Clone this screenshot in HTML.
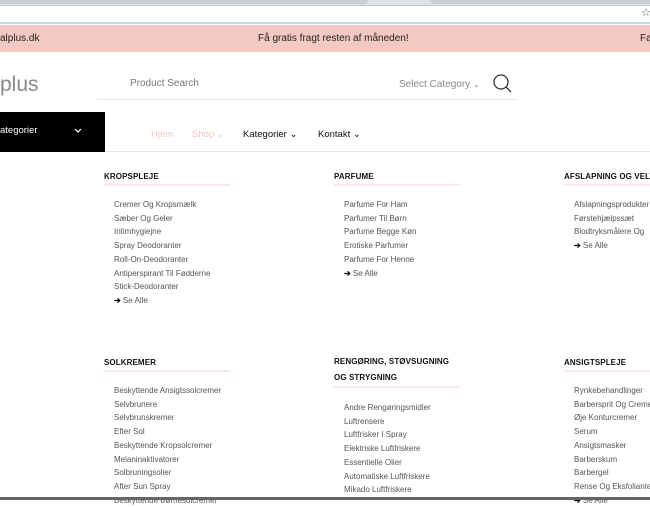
<!DOCTYPE html>
<html><head><meta charset="utf-8"><style>
*{margin:0;padding:0;box-sizing:border-box}
body{width:650px;height:500px;overflow:hidden;background:#fff;font-family:"Liberation Sans",sans-serif;position:relative}
.a{position:absolute;white-space:nowrap}
.h{font-size:8px;font-weight:bold;color:#111;letter-spacing:.1px}
.u{position:absolute;height:2px;background:#fae6e6;width:126px}
.i{font-size:8px;color:#555;line-height:13.7px}
</style></head><body>
<div class="a" style="left:0;top:0;width:650px;height:5px;background:#dfe3e8"></div>
<div class="a" style="left:0;top:0;width:368px;height:4px;background:#c9ced4;border-radius:0 0 4px 0"></div>
<div class="a" style="left:430px;top:0;width:220px;height:4px;background:#c9ced4;border-radius:0 0 0 4px"></div>
<div class="a" style="left:0;top:5px;width:650px;height:1px;background:#b7cbe6"></div>
<div class="a" style="left:0;top:22px;width:650px;height:2px;background:#c8d6ea"></div>
<div class="a" style="left:641px;top:6px;font-size:11px;color:#555">☆</div>
<div class="a" style="left:0;top:25px;width:650px;height:27px;background:#f4c8c3"></div>
<div class="a" style="left:0;top:33px;font-size:10px;color:#222">alplus.dk</div>
<div class="a" style="left:258px;top:33px;font-size:10px;color:#222">Få gratis fragt resten af måneden!</div>
<div class="a" style="left:640px;top:33px;font-size:10px;color:#222">Fa</div>
<div class="a" style="left:0;top:73px;font-size:21px;color:#8a8a8a">plus</div>
<div class="a" style="left:130px;top:78px;font-size:10px;color:#777">Product Search</div>
<div class="a" style="left:399px;top:79px;font-size:10px;color:#888">Select Category <span style="font-size:8px">⌄</span></div>
<svg class="a" style="left:492px;top:73px" width="22" height="22" viewBox="0 0 22 22"><circle cx="9" cy="9" r="7" fill="none" stroke="#333" stroke-width="1.3"/><line x1="14" y1="14" x2="19" y2="19" stroke="#333" stroke-width="1.3"/></svg>
<div class="a" style="left:97px;top:99px;width:420px;height:1px;background:#e8e8e8"></div>
<div class="a" style="left:0;top:112px;width:105px;height:40px;background:#000"></div>
<div class="a" style="left:0;top:125px;font-size:9.5px;color:#fff">ategorier</div>
<svg class="a" style="left:74px;top:128px" width="8" height="6"><path d="M1 1L4 4L7 1" fill="none" stroke="#fff" stroke-width="1.2"/></svg>
<div class="a" style="left:105px;top:151px;width:545px;height:1px;background:#e6e6e6"></div>
<div class="a" style="left:151px;top:129px;font-size:9.5px;color:#f3c4c2">Hjem</div>
<div class="a" style="left:192px;top:129px;font-size:9.5px;color:#f3c4c2">Shop ⌄</div>
<div class="a" style="left:243px;top:129px;font-size:9.5px;color:#111">Kategorier ⌄</div>
<div class="a" style="left:318px;top:129px;font-size:9.5px;color:#111">Kontakt ⌄</div>

<div class="a h" style="left:104px;top:172px">KROPSPLEJE</div><div class="u" style="left:104px;top:184px"></div>
<div class="a i" style="left:114px;top:198px">Cremer Og Kropsmælk<br>Sæber Og Geler<br>Intimhygiejne<br>Spray Deodoranter<br>Roll-On-Deodoranter<br>Antiperspirant Til Fødderne<br>Stick-Deodoranter<br><b style="color:#000">➔</b> Se Alle</div>
<div class="a h" style="left:334px;top:172px">PARFUME</div><div class="u" style="left:334px;top:184px"></div>
<div class="a i" style="left:344px;top:198px">Parfume For Ham<br>Parfumer Til Børn<br>Parfume Begge Køn<br>Erotiske Parfumer<br>Parfume For Henne<br><b style="color:#000">➔</b> Se Alle</div>
<div class="a h" style="left:564px;top:172px">AFSLAPNING OG VELVÆRE</div><div class="u" style="left:564px;top:184px"></div>
<div class="a i" style="left:574px;top:198px">Afslapningsprodukter<br>Førstehjælpssæt<br>Blodtryksmålere Og<br><b style="color:#000">➔</b> Se Alle</div>

<div class="a h" style="left:104px;top:358px">SOLKREMER</div><div class="u" style="left:104px;top:370px"></div>
<div class="a i" style="left:114px;top:384px">Beskyttende Ansigtssolcremer<br>Selvbrunere<br>Selvbrunskremer<br>Efter Sol<br>Beskyttende Kropsolcremer<br>Melaninaktivatorer<br>Solbruningsolier<br>After Sun Spray<br>Beskyttende Børnesolcremer</div>
<div class="a h" style="left:334px;top:354px;line-height:16px">RENGØRING, STØVSUGNING<br>OG STRYGNING</div><div class="u" style="left:334px;top:386px"></div>
<div class="a i" style="left:344px;top:401px">Andre Rengøringsmidler<br>Luftrensere<br>Luftfrisker I Spray<br>Elektriske Luftfriskere<br>Essentielle Olier<br>Automatiske Luftfriskere<br>Mikado Luftfriskere</div>
<div class="a h" style="left:564px;top:358px">ANSIGTSPLEJE</div><div class="u" style="left:564px;top:370px"></div>
<div class="a i" style="left:574px;top:384px">Rynkebehandlinger<br>Barbersprit Og Cremer<br>Øje Konturcremer<br>Serum<br>Ansigtsmasker<br>Barberskum<br>Barbergel<br>Rense Og Eksfolianter<br><b style="color:#000">➔</b> Se Alle</div>
<div class="a" style="left:0;top:497px;width:650px;height:3px;background:#666"></div>
</body></html>
